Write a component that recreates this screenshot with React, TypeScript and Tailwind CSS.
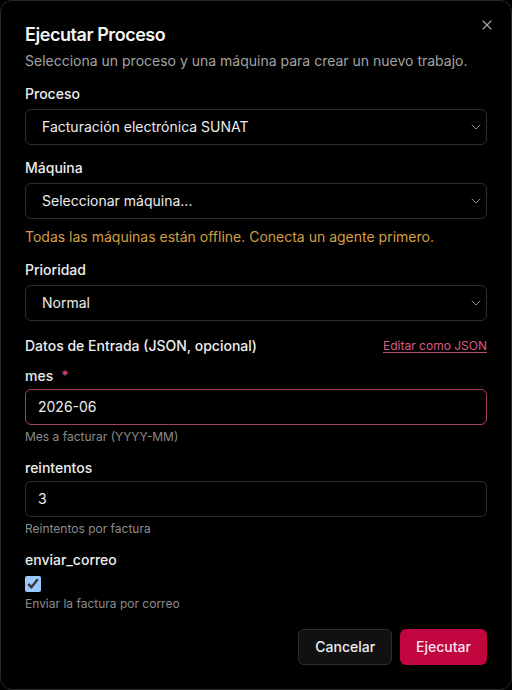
import { ChevronDown, X } from "lucide-react";

type FieldSelectProps = {
  label: string;
  value: string;
};

function FieldSelect({ label, value }: FieldSelectProps) {
  return (
    <div className="flex flex-col gap-2">
      <label className="text-sm leading-none font-medium text-[#ededed]">{label}</label>
      <div className="flex h-9 items-center justify-between rounded-md border border-[#2e2e2e] bg-black pl-4 pr-[2px]">
        <span className="text-sm text-[#ededed]">{value}</span>
        <ChevronDown className="size-4 text-[#8a8a8a]" strokeWidth={1.5} />
      </div>
    </div>
  );
}

type JsonFieldProps = {
  name: string;
  value: string;
  hint: string;
  required?: boolean;
  invalid?: boolean;
};

function JsonField({ name, value, hint, required, invalid }: JsonFieldProps) {
  return (
    <div className="flex flex-col">
      <label className="flex items-center gap-2 text-sm leading-none font-medium text-[#ededed]">
        {name}
        {required && <span className="text-[#e0446f]">*</span>}
      </label>
      <div
        className={`mt-[6px] flex h-9 items-center rounded-md border px-3 ${
          invalid ? "border-[#a5415f]" : "border-[#2e2e2e]"
        }`}
      >
        <span className="text-sm text-[#ededed]">{value}</span>
      </div>
      <p className="mt-1 text-xs leading-4 text-[#8c8c8c]">{hint}</p>
    </div>
  );
}

export default function App() {
  return (
    <div className="min-h-[690px] bg-black font-['Inter',sans-serif]">
      <div className="relative flex h-[690px] flex-col rounded-xl border border-[#2a2a2a] bg-black px-6 pt-[21px] pb-6">
        <button className="absolute right-4 top-4 text-[#a3a3a3]">
          <X className="size-4" strokeWidth={1.75} />
        </button>

        {/* Header */}
        <h2 className="mt-[1px] text-lg leading-6 font-semibold tracking-tight text-[#f5f5f5]">
          Ejecutar Proceso
        </h2>
        <p className="mt-[4px] text-sm leading-5 text-[#a3a3a3]">
          Selecciona un proceso y una máquina para crear un nuevo trabajo.
        </p>

        {/* Form */}
        <div className="mt-4 flex flex-col gap-4">
          <FieldSelect label="Proceso" value="Facturación electrónica SUNAT" />

          <div className="flex flex-col">
            <FieldSelect label="Máquina" value="Seleccionar máquina..." />
            <p className="mt-2 text-sm leading-5 text-[#d29f45]">
              Todas las máquinas están offline. Conecta un agente primero.
            </p>
          </div>

          <FieldSelect label="Prioridad" value="Normal" />

          <div className="mt-[2px] flex items-center justify-between">
            <span className="text-sm leading-none font-medium text-[#ededed]">
              Datos de Entrada (JSON, opcional)
            </span>
            <button className="text-xs leading-none text-[#dc5a80] underline decoration-[#b8506e] underline-offset-2">
              Editar como JSON
            </button>
          </div>

          <JsonField name="mes" value="2026-06" hint="Mes a facturar (YYYY-MM)" required invalid />
          <JsonField name="reintentos" value="3" hint="Reintentos por factura" />

          <div className="flex flex-col">
            <label className="text-sm leading-none font-medium text-[#ededed]">enviar_correo</label>
            <input
              type="checkbox"
              defaultChecked
              className="mt-[9px] size-4 [color-scheme:dark]"
            />
            <p className="mt-1 text-xs leading-4 text-[#8c8c8c]">Enviar la factura por correo</p>
          </div>
        </div>

        {/* Footer */}
        <div className="mt-[17px] flex justify-end gap-2">
          <button className="h-9 rounded-md border border-[#2e2e2e] bg-[#111111] px-4 text-sm font-medium text-[#ededed]">
            Cancelar
          </button>
          <button className="h-9 rounded-md bg-[#c1053f] px-4 text-sm font-medium text-[#fbe3ea]">
            Ejecutar
          </button>
        </div>
      </div>
    </div>
  );
}
